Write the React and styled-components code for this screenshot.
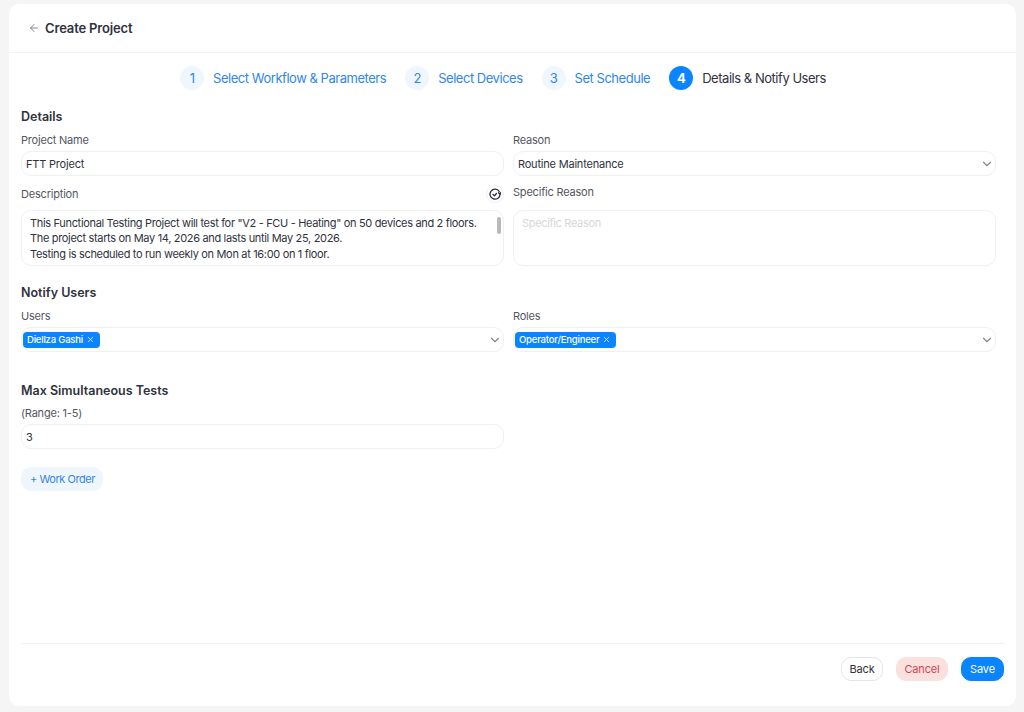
import React from 'react';
import styled, { createGlobalStyle } from 'styled-components';
import { ArrowLeft, ChevronDown, X } from 'lucide-react';

const GlobalStyle = createGlobalStyle`
    html, body {
        margin: 0;
        height: 100%;
        background: #f5f5f5;
        font-family: Inter, "Noto Sans", sans-serif;
        color: #2b2d3a;
    }
    * {
        box-sizing: border-box;
    }
`;

const Page = styled.div`
    height: 712px;
    padding: 4px 8px 6px 9px;
`;

const Card = styled.main`
    height: 100%;
    display: flex;
    flex-direction: column;
    background: white;
    border-radius: 10px;
`;

const Header = styled.header`
    height: 49px;
    flex: none;
    display: flex;
    align-items: center;
    gap: 5px;
    padding: 0 19px 1px;
    border-bottom: 1px solid #f1f2f4;
`;

const BackArrow = styled(ArrowLeft)`
    color: #85878f;
`;

const Title = styled.h1`
    margin: 0;
    font-size: 13px;
    font-weight: 600;
    letter-spacing: -0.15px;
    color: #30323e;
`;

const Stepper = styled.nav`
    display: flex;
    justify-content: center;
    gap: 19px;
    padding: 12px 19px 0 0;
    height: 37px;
`;

const Step = styled.div`
    display: flex;
    align-items: center;
    gap: 9px;
    font-size: 13px;
    letter-spacing: -0.47px;
    color: ${p => (p.$active ? '#30323e' : '#2f86f0')};
`;

const StepNumber = styled.span`
    width: 24px;
    height: 24px;
    border-radius: 50%;
    display: flex;
    align-items: center;
    justify-content: center;
    font-weight: ${p => (p.$active ? 700 : 400)};
    background: ${p => (p.$active ? '#0a84ff' : '#f0f6fe')};
    color: ${p => (p.$active ? 'white' : '#2f86f0')};
`;

const Form = styled.div`
    flex: 1;
    padding: 0 20px 0 12px;
`;

const SectionTitle = styled.h2`
    margin: ${p => p.$top}px 0 0;
    font-size: 12.5px;
    line-height: 16px;
    font-weight: 600;
    color: #30323e;
`;

const Grid = styled.div`
    display: grid;
    grid-template-columns: 1fr 1fr;
    column-gap: 9px;
`;

const Field = styled.div`
    min-width: 0;
`;

const LabelRow = styled.div`
    display: flex;
    align-items: center;
    justify-content: space-between;
    height: 18px;
    margin-top: ${p => p.$top}px;
    margin-bottom: ${p => p.$bottom}px;
`;

const Label = styled.label`
    font-size: 11px;
    letter-spacing: -0.2px;
    color: #54565f;
`;

const Input = styled.div`
    height: 25px;
    display: flex;
    align-items: center;
    justify-content: space-between;
    padding: 0 1px 0 ${p => p.$left || 4}px;
    border: 1px solid #eff0f2;
    border-radius: 10px;
    font-size: 11px;
    letter-spacing: -0.2px;
    color: #30323e;
`;

const Chevron = styled(ChevronDown).attrs({ size: 14 })`
    color: #85878f;
    flex: none;
`;

const Chip = styled.span`
    display: inline-flex;
    align-items: center;
    gap: 3px;
    height: 16px;
    padding: 0 5px 0 4px;
    border-radius: 4px;
    background: #0a84ff;
    color: white;
    font-size: 9.5px;
    font-weight: 500;
    letter-spacing: -0.2px;
`;

const TextBox = styled.div`
    position: relative;
    height: 56px;
    padding: 5px 8px;
    border: 1px solid #eff0f2;
    border-radius: 10px;
    font-size: 11px;
    line-height: 15.3px;
    letter-spacing: -0.33px;
    color: ${p => (p.$placeholder ? '#d6d7da' : '#30323e')};
`;

const ScrollThumb = styled.span`
    position: absolute;
    top: 6px;
    right: 2px;
    width: 4px;
    height: 17px;
    border-radius: 2px;
    background: #b9b9b9;
`;

const IconButton = styled.button`
    width: 18px;
    height: 18px;
    padding: 0;
    display: flex;
    align-items: center;
    justify-content: center;
    border: 1px solid #eceef0;
    border-radius: 50%;
    background: white;
    color: #2b2d3a;
`;

const WorkOrder = styled.button`
    display: block;
    height: 24px;
    padding: 0 8px 0 9px;
    margin-top: 18px;
    border: none;
    border-radius: 10px;
    background: #f0f6fe;
    color: #2f86f0;
    font: 400 11px Inter, sans-serif;
    letter-spacing: -0.45px;
`;

const Footer = styled.footer`
    flex: none;
    margin: 0 12px;
    height: 63px;
    padding-top: 13px;
    display: flex;
    justify-content: flex-end;
    gap: 13px;
    border-top: 1px solid #f1f2f4;
`;

const FooterButton = styled.button`
    height: 24px;
    width: ${p => p.$width}px;
    padding: 0;
    border-radius: 10px;
    font: 400 11px Inter, sans-serif;
    letter-spacing: -0.15px;
    border: 1px solid ${p => p.$border || p.$bg};
    background: ${p => p.$bg};
    color: ${p => p.$color};
`;

const steps = ['Select Workflow & Parameters', 'Select Devices', 'Set Schedule', 'Details & Notify Users'];

const RefreshCheck = () => (
    <svg width="12" height="12" viewBox="0 0 24 24" fill="none" stroke="currentColor" strokeWidth="2.6" strokeLinecap="round" strokeLinejoin="round">
        <path d="M20.5 7A10 10 0 1 0 22 12" />
        <path d="M22 12l-3-2.5M22 12l1.5-3" />
        <path d="M8 13l3 2.5 4-4.5" />
    </svg>
);

const Tag = ({ children }) => (
    <Chip>
        {children}
        <X size={9} />
    </Chip>
);

const App = () => {
    return (
        <Page>
            <GlobalStyle />
            <Card>
                <Header>
                    <BackArrow size={12} />
                    <Title>Create Project</Title>
                </Header>
                <Stepper>
                    {steps.map((s, i) => (
                        <Step key={s} $active={i === 3}>
                            <StepNumber $active={i === 3}>{i + 1}</StepNumber>
                            {s}
                        </Step>
                    ))}
                </Stepper>
                <Form>
                    <SectionTitle $top={19}>Details</SectionTitle>
                    <Grid>
                        <Field>
                            <LabelRow $top={6} $bottom={2}><Label>Project Name</Label></LabelRow>
                            <Input>FTT Project</Input>
                        </Field>
                        <Field>
                            <LabelRow $top={6} $bottom={2}><Label>Reason</Label></LabelRow>
                            <Input>Routine Maintenance<Chevron /></Input>
                        </Field>
                        <Field>
                            <LabelRow $top={9} $bottom={7}>
                                <Label>Description</Label>
                                <IconButton><RefreshCheck /></IconButton>
                            </LabelRow>
                            <TextBox>
                                This Functional Testing Project will test for "V2 - FCU - Heating" on 50 devices and 2 floors.<br />
                                The project starts on May 14, 2026 and lasts until May 25, 2026.<br />
                                Testing is scheduled to run weekly on Mon at 16:00 on 1 floor.
                                <ScrollThumb />
                            </TextBox>
                        </Field>
                        <Field>
                            <LabelRow $top={7} $bottom={9}><Label>Specific Reason</Label></LabelRow>
                            <TextBox $placeholder>Specific Reason</TextBox>
                        </Field>
                    </Grid>
                    <SectionTitle $top={19}>Notify Users</SectionTitle>
                    <Grid>
                        <Field>
                            <LabelRow $top={6} $bottom={2}><Label>Users</Label></LabelRow>
                            <Input $left={1}><Tag>Diellza Gashi</Tag><Chevron /></Input>
                        </Field>
                        <Field>
                            <LabelRow $top={6} $bottom={2}><Label>Roles</Label></LabelRow>
                            <Input $left={1}><Tag>Operator/Engineer</Tag><Chevron /></Input>
                        </Field>
                    </Grid>
                    <SectionTitle $top={31}>Max Simultaneous Tests</SectionTitle>
                    <Grid>
                        <Field>
                            <LabelRow $top={5} $bottom={2}><Label>(Range: 1-5)</Label></LabelRow>
                            <Input>3</Input>
                        </Field>
                    </Grid>
                    <WorkOrder>+ Work Order</WorkOrder>
                </Form>
                <Footer>
                    <FooterButton $width={42} $bg="white" $border="#e3e5e8" $color="#30323e">Back</FooterButton>
                    <FooterButton $width={52} $bg="#fbe0e0" $color="#d9434e">Cancel</FooterButton>
                    <FooterButton $width={43} $bg="#0a84ff" $color="white">Save</FooterButton>
                </Footer>
            </Card>
        </Page>
    );
};

export default App;
